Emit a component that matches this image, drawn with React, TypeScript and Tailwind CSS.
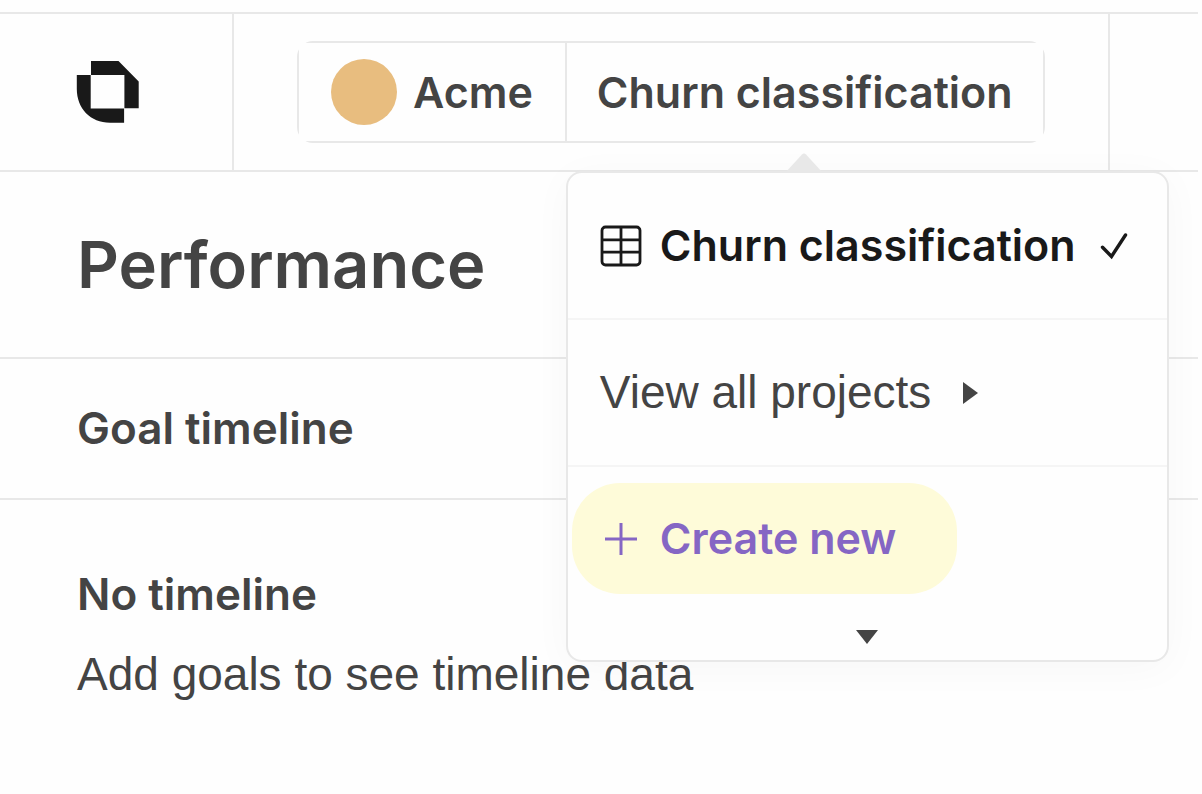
import { useState } from "react";

function Logo() {
  return (
    <svg width="64" height="64" viewBox="0 0 64 64" fill="#191919">
      <path d="M15 1H42.5L62.7 21.5V48.3H48.4V15H15Z" />
      <path d="M0.8 15H14.7V48.4H48.1V62.7H34C14.5 62.7 0.8 48.5 0.8 29Z" />
    </svg>
  );
}

function TableIcon() {
  return (
    <svg width="42" height="42" viewBox="0 0 42 42" fill="none" stroke="#191919" strokeWidth="2.8">
      <rect x="2" y="2" width="38" height="38" rx="3.5" />
      <path d="M21 2V40M2 14.8H40M2 27.2H40" />
    </svg>
  );
}

function CheckIcon() {
  return (
    <svg width="28" height="28" viewBox="0 0 28 28" fill="none" stroke="#191919" strokeWidth="3.4" strokeLinecap="round">
      <path d="M2.5 15.3L11.5 24.5L25.5 3" />
    </svg>
  );
}

function PlusIcon() {
  return (
    <svg width="42" height="42" viewBox="0 0 42 42" fill="none" stroke="#8566c4" strokeWidth="3">
      <path d="M21 5V37M5 21H37" />
    </svg>
  );
}

function ProjectMenu() {
  return (
    <div className="absolute top-full left-0 -ml-px mt-[30px] w-[603px] z-10 whitespace-nowrap rounded-2xl border-2 border-[#e8e8e8] bg-[#fefefe] leading-[57px] shadow-[0_6px_40px_rgba(0,0,0,0.03)]">
      {/* Caret */}
      <svg className="absolute -top-5 left-[217px]" width="38" height="20" viewBox="0 0 38 20" fill="#e8e8e8">
        <path d="M0 20L17 1.5Q19 -0.5 21 1.5L38 20Z" />
      </svg>

      <button className="flex w-full items-center border-b-2 border-[#f5f5f5] px-8 py-11 text-[#191919] cursor-pointer">
        <TableIcon />
        <span className="ml-[18px] mr-6">Churn classification</span>
        <CheckIcon />
      </button>

      <button className="flex w-full items-center gap-8 border-b-2 border-[#f5f5f5] px-8 py-11 font-['Liberation_Sans',sans-serif] text-[46px] leading-[57px] font-normal cursor-pointer">
        View all projects
        <svg width="15" height="22" viewBox="0 0 15 22" fill="#444444">
          <path d="M0 0V22L15 11Z" />
        </svg>
      </button>

      <div className="flex flex-col items-center px-1 py-4">
        <button className="flex items-center gap-[18px] self-start rounded-[48px] bg-[#fefbd9] pl-7 pr-[61px] py-[27px] text-[#8566c4] cursor-pointer">
          <PlusIcon />
          Create new
        </button>
        <svg className="mt-9" width="22" height="14" viewBox="0 0 22 14" fill="#444444">
          <path d="M0 0H22L11 14Z" />
        </svg>
      </div>
    </div>
  );
}

export default function App() {
  const [open, setOpen] = useState(true);

  return (
    <div className="min-h-screen bg-[#fefefe] pt-3 pr-1 font-[Inter,sans-serif] text-[44px] leading-[58px] text-[#444444]">
      {/* Header */}
      <header className="flex border-y-2 border-[#e8e8e8]">
        <a href="#" aria-label="Home" className="flex items-center border-r-2 border-[#e8e8e8] pl-[76px] pr-[92px]">
          <Logo />
        </a>
        <div className="border-r-2 border-[#e8e8e8] px-[63px] py-[27px]">
          <div className="flex rounded-2xl border-2 border-[#e8e8e8] text-[43px] leading-[58px] font-semibold">
            <button className="flex items-center gap-4 bg-[#fefefe] px-8 py-4 cursor-pointer">
              <span className="size-[66px] rounded-full bg-[#e8bd7f]" />
              Acme
            </button>
            <div className="relative border-l-2 border-[#e8e8e8]">
              <button className="h-full whitespace-nowrap bg-[#fefefe] px-[30px] py-4 cursor-pointer" onClick={() => setOpen(!open)}>
                Churn classification
              </button>
              {open && <ProjectMenu />}
            </div>
          </div>
        </div>
      </header>

      {/* Page */}
      <main>
        <h1 className="border-b-2 border-[#e8e8e8] px-[77px] py-[52px] text-[65px] leading-[81px] font-semibold">Performance</h1>
        <h2 className="border-b-2 border-[#e8e8e8] px-[77px] pt-10 pb-[41px] font-semibold">Goal timeline</h2>
        <section className="flex flex-col gap-[22px] px-[77px] pt-[65px]">
          <h3 className="font-semibold">No timeline</h3>
          <p className="font-['Liberation_Sans',sans-serif] text-[46px] leading-[58px]">Add goals to see timeline data</p>
        </section>
      </main>
    </div>
  );
}
